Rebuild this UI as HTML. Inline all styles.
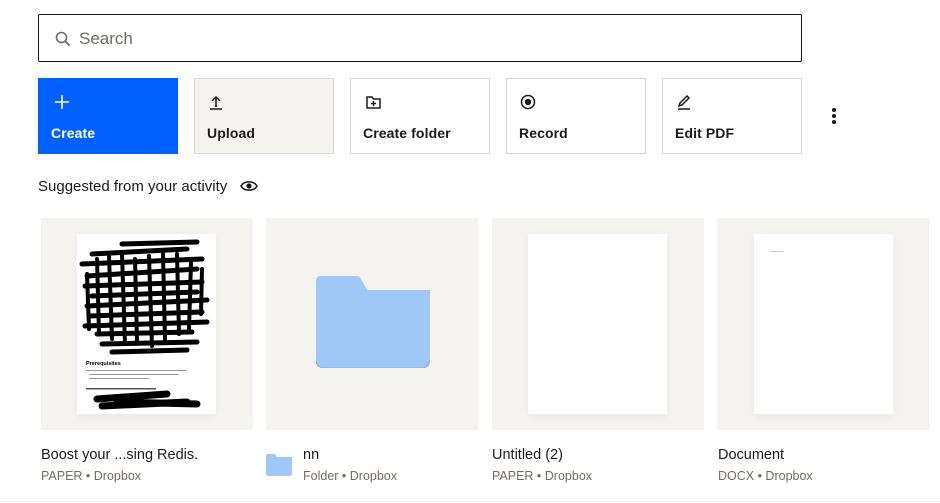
<!DOCTYPE html>
<html><head><meta charset="utf-8"><style>
*{box-sizing:border-box;margin:0;padding:0}
body{width:940px;height:503px;background:#fff;font-family:"Liberation Sans",sans-serif;color:#1e1919;position:relative;overflow:hidden}
.abs{position:absolute}
.search{left:38px;top:14px;width:764px;height:48px;border:1px solid #1e1919;border-radius:2px}
.search span{position:absolute;left:40px;top:14px;font-size:17px;color:#6f6a66}
.btn{top:78px;width:140px;height:76px;border:1px solid #dad7d3;background:#fff}
.btn .l{position:absolute;left:12px;top:46px;font-size:14px;font-weight:bold;letter-spacing:0.1px}
.btn svg{position:absolute;left:12px;top:14px}
.card{top:218px;width:212px;height:212px;background:#f5f3ef}
.page{background:#fff;box-shadow:0 2px 8px rgba(0,0,0,.05)}
.t{font-size:14.5px;color:#1e1919}
.s{font-size:12.5px;color:#736c64}
</style></head><body>
<div class="abs search"><svg class="abs" style="left:15px;top:15px" width="18" height="18" viewBox="0 0 18 18"><circle cx="7.5" cy="7.5" r="5" fill="none" stroke="#6f6a66" stroke-width="1.6"/><path d="M11 11l4.5 4.5" stroke="#6f6a66" stroke-width="1.8"/></svg><span>Search</span></div>

<div class="abs btn" style="left:38px;background:#0061fe;border-color:#0061fe;color:#fff"><svg width="18" height="18" viewBox="0 0 18 18" style="left:14px;top:14px"><path d="M9 2v14M2 9h14" stroke="#fff" stroke-width="1.6"/></svg><div class="l">Create</div></div>
<div class="abs btn" style="left:194px;background:#f5f3ef"><svg width="18" height="18" viewBox="0 0 18 18"><path d="M9 14V4M5 8l4-4 4 4M3 16h12" stroke="#1e1919" stroke-width="1.5" fill="none"/></svg><div class="l">Upload</div></div>
<div class="abs btn" style="left:350px"><svg width="20" height="18" viewBox="0 0 20 18"><path d="M4 4h5l1.5 2H17v9H4z" stroke="#1e1919" stroke-width="1.5" fill="none"/><path d="M10.5 8v5M8 10.5h5" stroke="#1e1919" stroke-width="1.5"/></svg><div class="l">Create folder</div></div>
<div class="abs btn" style="left:506px"><svg width="18" height="18" viewBox="0 0 18 18"><circle cx="9" cy="9" r="6.5" fill="none" stroke="#1e1919" stroke-width="1.5"/><circle cx="9" cy="9" r="3.2" fill="#1e1919"/></svg><div class="l">Record</div></div>
<div class="abs btn" style="left:662px"><svg width="18" height="18" viewBox="0 0 18 18"><path d="M4 13l1-3 7-7 2 2-7 7zM3 16h12" stroke="#1e1919" stroke-width="1.5" fill="none"/></svg><div class="l">Edit PDF</div></div>
<svg class="abs" style="left:830px;top:107px" width="8" height="20" viewBox="0 0 8 20"><circle cx="4" cy="3" r="2" fill="#1e1919"/><circle cx="4" cy="9" r="2" fill="#1e1919"/><circle cx="4" cy="15" r="2" fill="#1e1919"/></svg>

<div class="abs" style="left:38px;top:178px;font-size:15px">Suggested from your activity</div>
<svg class="abs" style="left:240px;top:179px" width="18" height="14" viewBox="0 0 18 14"><path d="M1 7C4 1.5 14 1.5 17 7 14 12.5 4 12.5 1 7z" fill="none" stroke="#1e1919" stroke-width="1.6"/><circle cx="9" cy="7" r="2.6" fill="#1e1919"/></svg>

<div class="abs card" style="left:41px"><div class="abs page" style="left:36px;top:16px;width:139px;height:180px">
<svg width="139" height="180" viewBox="0 0 139 180" style="position:absolute;left:0;top:0">
<g stroke="#000" stroke-width="5" fill="none" stroke-linecap="round">
<path d="M45 10 L120 8 M15 20 L110 15 M5 30 L125 25 M10 42 L120 35 M8 52 L125 48 M15 62 L120 58 M10 72 L130 66 M12 82 L125 78 M8 92 L130 88 M20 100 L115 98 M25 110 L120 108 M35 118 L110 116"/>
<path d="M20 25 L22 100 M32 22 L35 105 M45 20 L48 110 M58 25 L60 108 M72 22 L75 112 M86 20 L88 105 M100 20 L102 100 M114 28 L112 95 M125 35 L124 80 M10 40 L12 95" stroke-width="4"/>
<path d="M20 165 L90 160 M25 172 L110 168 M40 168 L120 170" stroke-width="7"/>
</g>
<text x="9" y="131" font-size="5.5" font-weight="bold" font-family="Liberation Sans">Prerequisites</text>
<rect x="9" y="136" width="100" height="1" fill="#999"/><rect x="12" y="140" width="90" height="1" fill="#999"/><rect x="12" y="144" width="60" height="1" fill="#999"/>
<rect x="9" y="154" width="70" height="1.5" fill="#555"/>
</svg></div></div>
<div class="abs card" style="left:266px"><svg class="abs" style="left:50px;top:58px" width="114" height="92" viewBox="0 0 114 92"><path d="M4 0h36c3 0 4 1 5 3l5 9c1 2 2 2 4 2h60v72c0 3-2 6-6 6H8c-4 0-8-3-8-7V4c0-2 2-4 4-4z" fill="#a0c8f6"/><path d="M0 85c0 4 4 7 8 7h98c4 0 6-3 6-6" stroke="#8ab2e0" fill="none"/></svg></div>
<div class="abs card" style="left:492px"><div class="abs page" style="left:36px;top:16px;width:139px;height:180px"></div></div>
<div class="abs card" style="left:717px"><div class="abs page" style="left:37px;top:16px;width:139px;height:180px"><div class="abs" style="left:16px;top:17px;width:14px;height:1px;background:#ccc"></div></div></div>

<div class="abs t" style="left:41px;top:447px">Boost your ...sing Redis.</div>
<div class="abs s" style="left:41px;top:469px">PAPER • Dropbox</div>
<svg class="abs" style="left:266px;top:454px" width="26" height="22" viewBox="0 0 26 22"><path d="M2 0h7l2 3h15v17c0 1-1 2-2 2H2c-1 0-2-1-2-2V2c0-1 1-2 2-2z" fill="#a0c8f6"/></svg>
<div class="abs t" style="left:303px;top:447px">nn</div>
<div class="abs s" style="left:303px;top:469px">Folder • Dropbox</div>
<div class="abs t" style="left:492px;top:447px">Untitled (2)</div>
<div class="abs s" style="left:492px;top:469px">PAPER • Dropbox</div>
<div class="abs t" style="left:718px;top:447px">Document</div>
<div class="abs s" style="left:718px;top:469px">DOCX • Dropbox</div>
<div class="abs" style="left:0;top:501px;width:940px;height:1px;background:#eee"></div>
</body></html>
